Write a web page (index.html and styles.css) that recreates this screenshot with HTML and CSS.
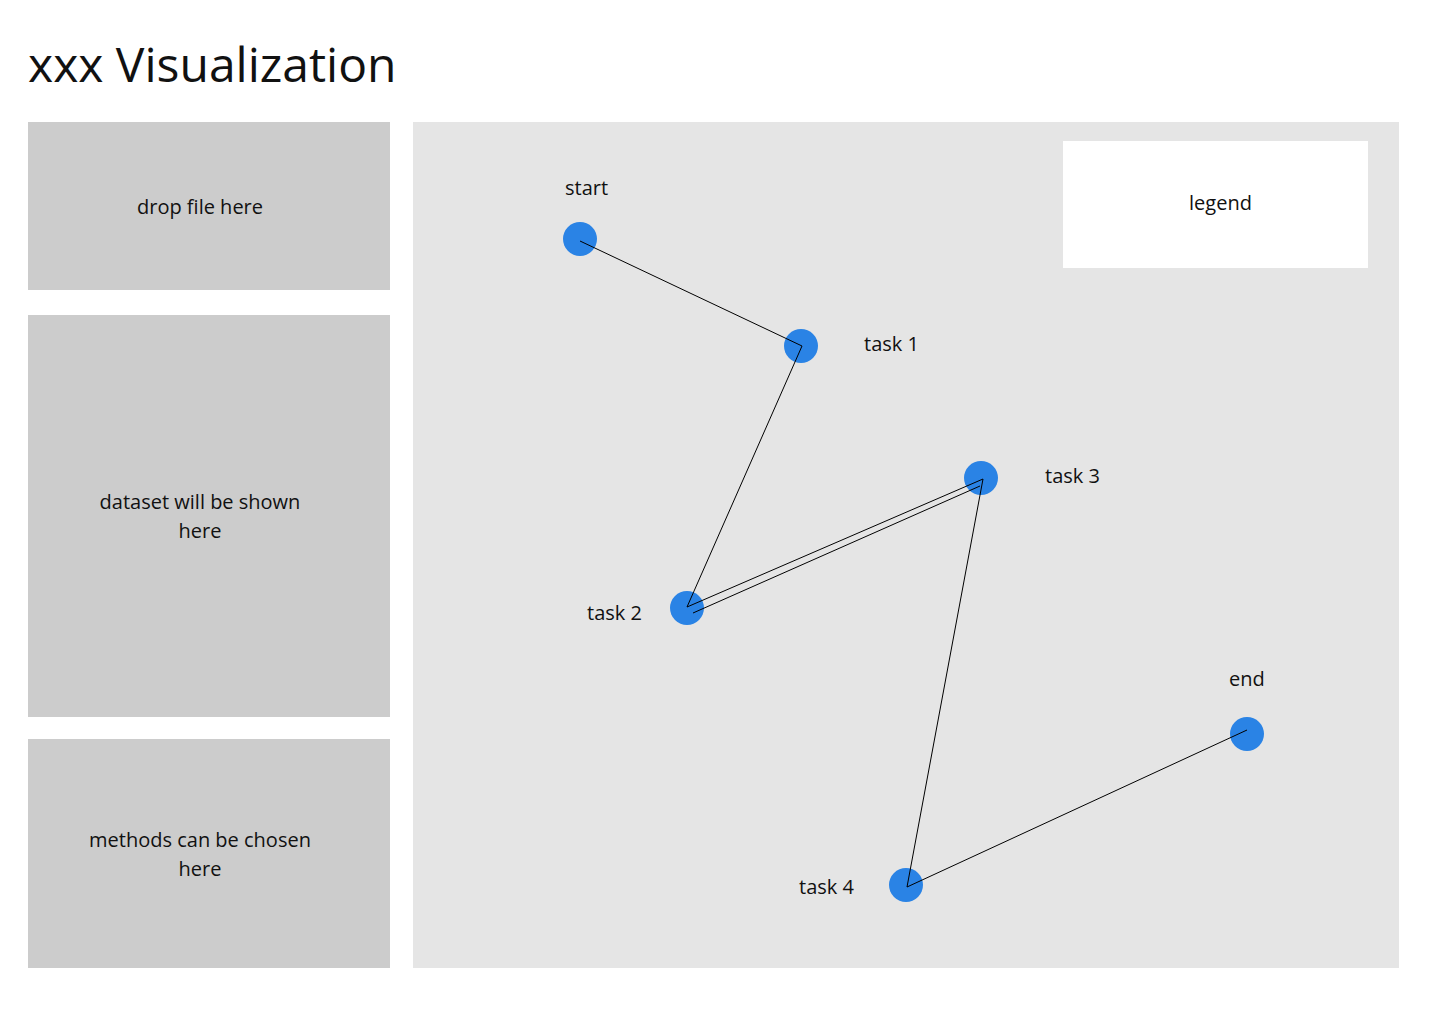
FILE: index.html
```html
<!DOCTYPE html>
<html lang="en">
<head>
<meta charset="utf-8">
<title>xxx Visualization</title>
<link rel="stylesheet" href="styles.css">
</head>
<body>
<h1 class="title">xxx Visualization</h1>
<main class="layout">
  <aside class="sidebar">
    <div class="panel panel-drop"><p class="panel-text">drop file here</p></div>
    <div class="panel panel-dataset"><p class="panel-text">dataset will be shown here</p></div>
    <div class="panel panel-methods"><p class="panel-text">methods can be chosen here</p></div>
  </aside>
  <section class="canvas">
    <svg class="graph" width="986" height="846" viewBox="0 0 986 846">
      <g class="nodes">
        <circle cx="167" cy="117" r="17"/>
        <circle cx="388" cy="224" r="17"/>
        <circle cx="274" cy="486" r="17"/>
        <circle cx="568" cy="356" r="17"/>
        <circle cx="493" cy="763" r="17"/>
        <circle cx="834" cy="612" r="17"/>
      </g>
      <g class="edges">
        <polyline points="167,119 389,224 274,485 570,357 494,765 834,608"/>
        <polyline points="280,491 567,364"/>
      </g>
      <g class="labels">
        <text x="152" y="73">start</text>
        <text x="451" y="229">task 1</text>
        <text x="632" y="361">task 3</text>
        <text x="174" y="498">task 2</text>
        <text x="816" y="564">end</text>
        <text x="386" y="772">task 4</text>
      </g>
    </svg>
    <div class="legend">legend</div>
  </section>
</main>
</body>
</html>
```

FILE: styles.css
```css
* { box-sizing: border-box; }

body {
  margin: 0;
  padding: 36px 28px 0 28px;
  background: #ffffff;
  color: #111111;
  font-family: "Open Sans", "Noto Sans", sans-serif;
}

.title {
  margin: 0 0 30px 0;
  font-size: 48px;
  line-height: 56px;
  font-weight: 400;
  color: #111111;
}

.layout {
  display: grid;
  grid-template-columns: 362px 986px;
  column-gap: 23px;
}

.sidebar {
  display: flex;
  flex-direction: column;
}

.panel {
  background: #cccccc;
  display: flex;
  align-items: center;
  justify-content: center;
  padding: 0 75px 0 57px;
}

.panel-drop { height: 168px; }
.panel-dataset { height: 402px; margin-top: 25px; }
.panel-methods { height: 229px; margin-top: 22px; }

.panel-text {
  margin: 0;
  text-align: center;
  font-size: 20px;
  line-height: 29px;
}

.canvas {
  position: relative;
  height: 846px;
  background: #e5e5e5;
}

.graph {
  display: block;
}

.nodes circle { fill: #2a83e5; }

.edges polyline {
  fill: none;
  stroke: #000000;
  stroke-width: 1;
}

.labels text {
  font-family: "Open Sans", "Noto Sans", sans-serif;
  font-size: 20px;
  fill: #111111;
}

.legend {
  position: absolute;
  left: 650px;
  top: 19px;
  width: 305px;
  height: 127px;
  background: #ffffff;
  display: flex;
  align-items: center;
  justify-content: center;
  padding: 0 0 4px 10px;
  font-size: 20px;
}
```
